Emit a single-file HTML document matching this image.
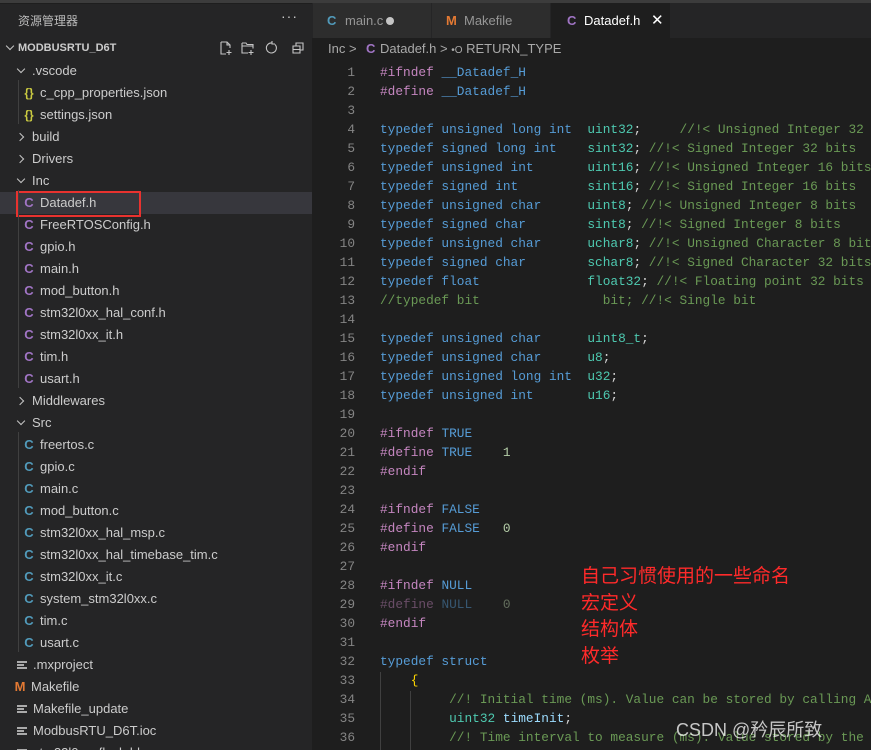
<!DOCTYPE html>
<html><head><meta charset="utf-8"><style>
*{margin:0;padding:0;box-sizing:border-box}
html,body{width:871px;height:750px;overflow:hidden}
body{background:#1e1e1e;font-family:"Liberation Sans","Noto Sans CJK SC",sans-serif;position:relative}
#top{position:absolute;left:0;top:0;width:871px;height:3px;background:#3c3c3c}
#side{position:absolute;left:0;top:4px;width:312px;height:746px;background:#252526;color:#cccccc;font-size:13px}
.row{position:absolute;left:0;height:22px;line-height:22px;white-space:nowrap;width:312px}
.chev{position:absolute;width:6px;height:6px;border-right:1.3px solid #c5c5c5;border-bottom:1.3px solid #c5c5c5}
.down{transform:rotate(45deg)}
.right{transform:rotate(-45deg)}
.ic{display:inline-block;font-weight:bold;width:14px;text-align:center;margin-right:4px}
.c{color:#519aba}.h{color:#a074c4}.j{color:#cbcb41;font-size:12px}.m{color:#e37933}
.lines{display:inline-block;width:10px;height:8px;border-top:2px solid #aaa;border-bottom:2px solid #aaa;position:relative;margin-right:6px;top:0px}
.lines:after{content:"";position:absolute;left:0;top:1px;width:7px;height:2px;background:#aaa}
#tabs{position:absolute;left:312px;top:3px;width:559px;height:35px;background:#252526}
.tab{position:absolute;top:0;height:35px;line-height:35px;font-size:13px;color:#969696;background:#2d2d2d;border-right:1px solid #252526}
#bc{position:absolute;left:312px;top:38px;width:559px;height:22px;line-height:22px;font-size:13px;color:#a9a9a9}
pre{font-family:"Liberation Mono",monospace;font-size:12.8px;line-height:19px;position:absolute;top:63px}
#ln{left:313px;width:42px;text-align:right;color:#858585}
#code{left:380px;color:#d4d4d4}
.k{color:#569cd6}.t{color:#4ec9b0}.cm{color:#6a9955}.p{color:#c586c0}.n{color:#b5cea8}.v{color:#9cdcfe}.dim{opacity:.45}
#note{position:absolute;left:581px;top:562px;color:#ff2a2a;font-size:19px;line-height:26.5px;font-family:"Noto Sans CJK SC",sans-serif}
#wm{position:absolute;left:676px;top:716px;color:#fff;opacity:.75;font-size:18px;font-family:"Liberation Sans","Noto Sans CJK SC",sans-serif}
.guide{position:absolute;width:1px;background:#404040}
</style></head><body>
<div id="top"></div>
<div id="side">
 <div style="position:absolute;left:18px;top:8px;font-size:12px;color:#bbb;font-family:'Noto Sans CJK SC',sans-serif">资源管理器</div>
 <div style="position:absolute;left:281px;top:4px;font-size:14px;color:#ccc;letter-spacing:1px">···</div>
 <div class="row" style="top:33px;font-weight:bold;font-size:11px"><span class="chev down" style="left:7px;top:6px"></span><span style="position:absolute;left:18px">MODBUSRTU_D6T</span>
  <svg style="position:absolute;left:218px;top:3px" width="90" height="16" viewBox="0 0 90 16" fill="none" stroke="#c5c5c5" stroke-width="1.1">
   <path d="M3 2h6l3 3v3M3 2v12h5M9 2v3h3M11 10v5M8.5 12.5h5"/>
   <path d="M24 3h4l1 1.5h6v4M24 3v10h6M24 6h11M33 10v5M30.5 12.5h5"/>
   <path d="M57 4.5a5 5 0 1 1-3-1.5M54 1v3h3"/>
   <path d="M75 6h7v7h-7zM78 6V3h7v7h-3M75 9.5h7"/>
  </svg></div>
 <div class="row" style="top:56px"><span class="chev down" style="left:18px;top:6px"></span><span style="position:absolute;left:32px">.vscode</span></div>
 <div class="row" style="top:78px"><span style="position:absolute;left:22px"><span class="ic j">{}</span>c_cpp_properties.json</span></div>
 <div class="row" style="top:100px"><span style="position:absolute;left:22px"><span class="ic j">{}</span>settings.json</span></div>
 <div class="row" style="top:122px"><span class="chev right" style="left:17px;top:8px"></span><span style="position:absolute;left:32px">build</span></div>
 <div class="row" style="top:144px"><span class="chev right" style="left:17px;top:8px"></span><span style="position:absolute;left:32px">Drivers</span></div>
 <div class="row" style="top:166px"><span class="chev down" style="left:18px;top:6px"></span><span style="position:absolute;left:32px">Inc</span></div>
 <div class="row" style="top:188px;background:#37373d"><span style="position:absolute;left:22px"><span class="ic h">C</span>Datadef.h</span></div>
 <div style="position:absolute;left:16px;top:187px;width:125px;height:26px;border:2px solid #e8322f"></div>
 <div class="row" style="top:210px"><span style="position:absolute;left:22px"><span class="ic h">C</span>FreeRTOSConfig.h</span></div>
 <div class="row" style="top:232px"><span style="position:absolute;left:22px"><span class="ic h">C</span>gpio.h</span></div>
 <div class="row" style="top:254px"><span style="position:absolute;left:22px"><span class="ic h">C</span>main.h</span></div>
 <div class="row" style="top:276px"><span style="position:absolute;left:22px"><span class="ic h">C</span>mod_button.h</span></div>
 <div class="row" style="top:298px"><span style="position:absolute;left:22px"><span class="ic h">C</span>stm32l0xx_hal_conf.h</span></div>
 <div class="row" style="top:320px"><span style="position:absolute;left:22px"><span class="ic h">C</span>stm32l0xx_it.h</span></div>
 <div class="row" style="top:342px"><span style="position:absolute;left:22px"><span class="ic h">C</span>tim.h</span></div>
 <div class="row" style="top:364px"><span style="position:absolute;left:22px"><span class="ic h">C</span>usart.h</span></div>
 <div class="row" style="top:386px"><span class="chev right" style="left:17px;top:8px"></span><span style="position:absolute;left:32px">Middlewares</span></div>
 <div class="row" style="top:408px"><span class="chev down" style="left:18px;top:6px"></span><span style="position:absolute;left:32px">Src</span></div>
 <div class="row" style="top:430px"><span style="position:absolute;left:22px"><span class="ic c">C</span>freertos.c</span></div>
 <div class="row" style="top:452px"><span style="position:absolute;left:22px"><span class="ic c">C</span>gpio.c</span></div>
 <div class="row" style="top:474px"><span style="position:absolute;left:22px"><span class="ic c">C</span>main.c</span></div>
 <div class="row" style="top:496px"><span style="position:absolute;left:22px"><span class="ic c">C</span>mod_button.c</span></div>
 <div class="row" style="top:518px"><span style="position:absolute;left:22px"><span class="ic c">C</span>stm32l0xx_hal_msp.c</span></div>
 <div class="row" style="top:540px"><span style="position:absolute;left:22px"><span class="ic c">C</span>stm32l0xx_hal_timebase_tim.c</span></div>
 <div class="row" style="top:562px"><span style="position:absolute;left:22px"><span class="ic c">C</span>stm32l0xx_it.c</span></div>
 <div class="row" style="top:584px"><span style="position:absolute;left:22px"><span class="ic c">C</span>system_stm32l0xx.c</span></div>
 <div class="row" style="top:606px"><span style="position:absolute;left:22px"><span class="ic c">C</span>tim.c</span></div>
 <div class="row" style="top:628px"><span style="position:absolute;left:22px"><span class="ic c">C</span>usart.c</span></div>
 <div class="row" style="top:650px"><span style="position:absolute;left:17px"><span class="lines"></span>.mxproject</span></div>
 <div class="row" style="top:672px"><span style="position:absolute;left:13px"><span class="ic m">M</span>Makefile</span></div>
 <div class="row" style="top:694px"><span style="position:absolute;left:17px"><span class="lines"></span>Makefile_update</span></div>
 <div class="row" style="top:716px"><span style="position:absolute;left:17px"><span class="lines"></span>ModbusRTU_D6T.ioc</span></div>
 <div class="row" style="top:738px"><span style="position:absolute;left:17px"><span class="lines"></span>stm32l0xx_flash.ld</span></div>
 <div class="guide" style="left:18px;top:76px;height:44px"></div>
 <div class="guide" style="left:18px;top:186px;height:198px"></div>
 <div class="guide" style="left:18px;top:428px;height:220px"></div>
</div>
<div id="tabs">
 <div class="tab" style="left:1px;width:119px"><span class="c" style="font-weight:bold;position:absolute;left:14px">C</span><span style="position:absolute;left:32px">main.c</span><span style="position:absolute;left:73px;top:14px;width:8px;height:8px;border-radius:50%;background:#c5c5c5"></span></div>
 <div class="tab" style="left:120px;width:119px"><span class="m" style="font-weight:bold;position:absolute;left:14px">M</span><span style="position:absolute;left:32px">Makefile</span></div>
 <div class="tab" style="left:239px;width:120px;background:#1e1e1e;color:#fff"><span class="h" style="font-weight:bold;position:absolute;left:16px">C</span><span style="position:absolute;left:33px">Datadef.h</span><span style="position:absolute;left:100px;font-size:15px">✕</span></div>
</div>
<div id="bc"><span style="position:absolute;left:16px">Inc &gt;</span><span class="h" style="font-weight:bold;position:absolute;left:54px">C</span><span style="position:absolute;left:68px">Datadef.h &gt; <span style="font-size:10px">•O</span> RETURN_TYPE</span></div>
<pre id="ln">1
2
3
4
5
6
7
8
9
10
11
12
13
14
15
16
17
18
19
20
21
22
23
24
25
26
27
28
29
30
31
32
33
34
35
36</pre>
<div class="guide" style="left:380px;top:672px;height:78px"></div>
<div class="guide" style="left:410px;top:691px;height:59px"></div>
<pre id="code"><span class="p">#ifndef</span> <span class="k">__Datadef_H</span>
<span class="p">#define</span> <span class="k">__Datadef_H</span>

<span class="k">typedef unsigned long int</span>  <span class="t">uint32</span>;     <span class="cm">//!&lt; Unsigned Integer 32 bits</span>
<span class="k">typedef signed long int</span>    <span class="t">sint32</span>; <span class="cm">//!&lt; Signed Integer 32 bits</span>
<span class="k">typedef unsigned int</span>       <span class="t">uint16</span>; <span class="cm">//!&lt; Unsigned Integer 16 bits</span>
<span class="k">typedef signed int</span>         <span class="t">sint16</span>; <span class="cm">//!&lt; Signed Integer 16 bits</span>
<span class="k">typedef unsigned char</span>      <span class="t">uint8</span>; <span class="cm">//!&lt; Unsigned Integer 8 bits</span>
<span class="k">typedef signed char</span>        <span class="t">sint8</span>; <span class="cm">//!&lt; Signed Integer 8 bits</span>
<span class="k">typedef unsigned char</span>      <span class="t">uchar8</span>; <span class="cm">//!&lt; Unsigned Character 8 bits</span>
<span class="k">typedef signed char</span>        <span class="t">schar8</span>; <span class="cm">//!&lt; Signed Character 32 bits</span>
<span class="k">typedef float</span>              <span class="t">float32</span>; <span class="cm">//!&lt; Floating point 32 bits</span>
<span class="cm">//typedef bit                bit; //!&lt; Single bit</span>

<span class="k">typedef unsigned char</span>      <span class="t">uint8_t</span>;
<span class="k">typedef unsigned char</span>      <span class="t">u8</span>;
<span class="k">typedef unsigned long int</span>  <span class="t">u32</span>;
<span class="k">typedef unsigned int</span>       <span class="t">u16</span>;

<span class="p">#ifndef</span> <span class="k">TRUE</span>
<span class="p">#define</span> <span class="k">TRUE</span>    <span class="n">1</span>
<span class="p">#endif</span>

<span class="p">#ifndef</span> <span class="k">FALSE</span>
<span class="p">#define</span> <span class="k">FALSE</span>   <span class="n">0</span>
<span class="p">#endif</span>

<span class="p">#ifndef</span> <span class="k">NULL</span>
<span class="dim"><span class="p">#define</span> <span class="k">NULL</span>    <span class="n">0</span></span>
<span class="p">#endif</span>

<span class="k">typedef struct</span>
    <span style="color:#ffd700">{</span>
         <span class="cm">//! Initial time (ms). Value can be stored by calling API</span>
         <span class="t">uint32</span> <span class="v">timeInit</span>;
         <span class="cm">//! Time interval to measure (ms). Value stored by the</span></pre>
<div id="note">自己习惯使用的一些命名<br>宏定义<br>结构体<br>枚举</div>
<div id="wm">CSDN @矜辰所致</div>
</body></html>
